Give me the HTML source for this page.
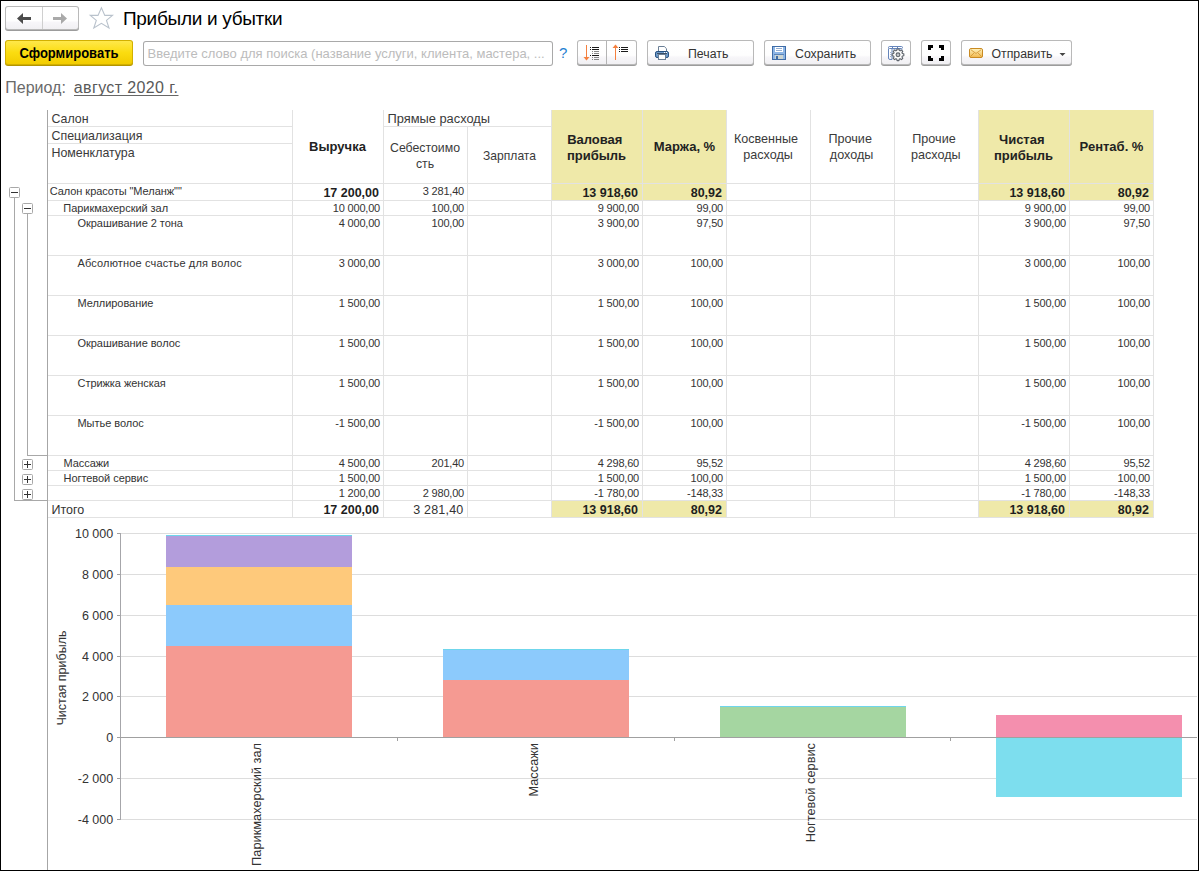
<!DOCTYPE html>
<html><head><meta charset="utf-8"><title>Прибыли и убытки</title>
<style>
html,body{margin:0;padding:0;background:#fff;}
body{width:1199px;height:871px;overflow:hidden;}
svg{display:block;font-family:"Liberation Sans",sans-serif;}
</style></head><body>
<svg width="1199" height="871" viewBox="0 0 1199 871">
<rect x="0" y="0" width="1199" height="871" fill="#fff"/>
<defs>
<linearGradient id="gbtn" x1="0" y1="0" x2="0" y2="1">
 <stop offset="0" stop-color="#ffffff"/><stop offset="0.62" stop-color="#fefefe"/><stop offset="0.7" stop-color="#f7f6f9"/><stop offset="1" stop-color="#f1f0f3"/>
</linearGradient>
<linearGradient id="gyel" x1="0" y1="0" x2="0" y2="1">
 <stop offset="0" stop-color="#ffe84a"/><stop offset="0.5" stop-color="#fbdc10"/><stop offset="1" stop-color="#f2cc00"/>
</linearGradient>
</defs>
<rect x="5" y="7" width="74" height="24" fill="#9c9c9c" rx="3"/>
<rect x="5" y="6" width="74" height="24" fill="#b9b9b9" rx="3"/>
<rect x="6" y="7" width="72" height="22" fill="url(#gbtn)" rx="2"/>
<rect x="42" y="7" width="1" height="22" fill="#cfcfcf"/>
<path d="M17 18.5 L23 13 L23 17 L31 17 L31 20 L23 20 L23 24 Z" fill="#4b4b4b"/>
<path d="M67 18.5 L61 13 L61 17 L53 17 L53 20 L61 20 L61 24 Z" fill="#a9a9a9"/>
<path d="M101.4 7.8 L104.8 15.4 L112.5 15.4 L106.5 20.4 L109 28 L101.4 23.3 L93.8 28 L96.3 20.4 L90.3 15.4 L98 15.4 Z" fill="none" stroke="#b9c2cc" stroke-width="1.1" stroke-linejoin="miter"/>
<text x="123" y="25" font-size="19" fill="#000" letter-spacing="-0.3">Прибыли и убытки</text>
<rect x="5" y="41" width="128" height="25" fill="#b39500" rx="3"/>
<rect x="5" y="40" width="128" height="25" fill="#d2b000" rx="3"/>
<rect x="6" y="41" width="126" height="23" fill="url(#gyel)" rx="2"/>
<text x="19.5" y="58" font-size="14" font-weight="700" fill="#000" textLength="99" lengthAdjust="spacingAndGlyphs">Сформировать</text>
<rect x="143" y="41" width="410" height="25" fill="#a9a9a9" rx="3"/>
<rect x="144" y="42" width="408" height="23" fill="#ffffff" rx="2"/>
<text x="147.5" y="57.5" font-size="13" fill="#bcbcbc">Введите слово для поиска (название услуги, клиента, мастера, ...</text>
<text x="559" y="58" font-size="15" fill="#1f7fd1">?</text>
<rect x="577" y="41" width="60" height="25" fill="#9c9c9c" rx="3"/>
<rect x="577" y="40" width="60" height="25" fill="#b9b9b9" rx="3"/>
<rect x="578" y="41" width="58" height="23" fill="url(#gbtn)" rx="2"/>
<rect x="606" y="41" width="1" height="24" fill="#b4b4b4"/>
<g fill="#f5803e"><rect x="586" y="45" width="1" height="13"/><path d="M583.5 57 L589.5 57 L586.5 60.5 Z"/></g>
<rect x="590" y="47" width="1" height="1" fill="#1a1a1a"/>
<rect x="592" y="47" width="7" height="1" fill="#1a1a1a"/>
<rect x="590" y="49" width="1" height="1" fill="#1a1a1a"/>
<rect x="592" y="49" width="7" height="1" fill="#1a1a1a"/>
<rect x="592" y="51" width="1" height="1" fill="#8a8a8a"/>
<rect x="594" y="51" width="5" height="1" fill="#8a8a8a"/>
<rect x="592" y="53" width="1" height="1" fill="#8a8a8a"/>
<rect x="594" y="53" width="5" height="1" fill="#8a8a8a"/>
<rect x="590" y="55" width="1" height="1" fill="#1a1a1a"/>
<rect x="592" y="55" width="7" height="1" fill="#1a1a1a"/>
<rect x="592" y="57" width="1" height="1" fill="#8a8a8a"/>
<rect x="594" y="57" width="5" height="1" fill="#8a8a8a"/>
<rect x="592" y="59" width="1" height="1" fill="#8a8a8a"/>
<rect x="594" y="59" width="5" height="1" fill="#8a8a8a"/>
<g fill="#f5803e"><rect x="615" y="47" width="1" height="13"/><path d="M612.5 48 L618.5 48 L615.5 44.5 Z"/></g>
<rect x="619" y="47" width="1" height="1" fill="#1a1a1a"/>
<rect x="621" y="47" width="7" height="1" fill="#1a1a1a"/>
<rect x="619" y="49" width="1" height="1" fill="#1a1a1a"/>
<rect x="621" y="49" width="7" height="1" fill="#1a1a1a"/>
<rect x="619" y="51" width="1" height="1" fill="#1a1a1a"/>
<rect x="621" y="51" width="7" height="1" fill="#1a1a1a"/>
<rect x="647" y="41" width="107" height="25" fill="#9c9c9c" rx="3"/>
<rect x="647" y="40" width="107" height="25" fill="#b9b9b9" rx="3"/>
<rect x="648" y="41" width="105" height="23" fill="url(#gbtn)" rx="2"/>
<path d="M658.5 51 V46.5 H664.3 L666.5 48.7 V51" fill="#fff" stroke="#6a7f96" stroke-width="1"/>
<rect x="655.5" y="51.5" width="13" height="6" rx="1.6" fill="#6f9ac8" stroke="#244f80" stroke-width="1"/>
<rect x="657" y="53" width="10" height="1" fill="#3c4f66"/>
<rect x="664" y="52" width="1" height="1" fill="#ffffff"/>
<rect x="666" y="52" width="1" height="1" fill="#ffffff"/>
<rect x="658.5" y="54.5" width="7" height="5" fill="#fff" stroke="#6a7f96" stroke-width="1"/>
<text x="688" y="57.5" font-size="12.3" fill="#333">Печать</text>
<rect x="764" y="41" width="107" height="25" fill="#9c9c9c" rx="3"/>
<rect x="764" y="40" width="107" height="25" fill="#b9b9b9" rx="3"/>
<rect x="765" y="41" width="105" height="23" fill="url(#gbtn)" rx="2"/>
<rect x="772" y="46" width="14" height="14" fill="#3f6ca6"/>
<rect x="773" y="47" width="12" height="12" fill="#8db6e6"/>
<rect x="775" y="47" width="8" height="5" fill="#ffffff"/>
<rect x="776" y="48" width="6" height="1" fill="#93add0"/>
<rect x="776" y="50" width="6" height="1" fill="#93add0"/>
<rect x="774" y="54" width="10" height="1" fill="#5a82b6"/>
<rect x="775" y="55" width="8" height="4" fill="#cbd4d2"/>
<rect x="776" y="56" width="2" height="3" fill="#3f6ca6"/>
<text x="795" y="57.5" font-size="12.3" fill="#333">Сохранить</text>
<rect x="881" y="41" width="30" height="25" fill="#9c9c9c" rx="3"/>
<rect x="881" y="40" width="30" height="25" fill="#b9b9b9" rx="3"/>
<rect x="882" y="41" width="28" height="23" fill="url(#gbtn)" rx="2"/>
<g fill="none" stroke="#6585bb" stroke-width="1"><rect x="888.5" y="46.5" width="14" height="2" rx="1"/><path d="M888.5 48.5 V58 Q888.5 59.5 890 59.5 H892 V48.5"/></g>
<rect x="892" y="46" width="1" height="3" fill="#6585bb"/>
<rect x="897" y="46" width="1" height="3" fill="#6585bb"/>
<rect x="893" y="49" width="10" height="1" fill="#c9d3e3"/>
<rect x="902" y="49" width="1" height="3" fill="#c9d3e3"/>
<rect x="890" y="52" width="1" height="1" fill="#9fb0cf"/>
<rect x="890" y="54" width="1" height="1" fill="#9fb0cf"/>
<rect x="890" y="56" width="1" height="1" fill="#9fb0cf"/>
<path d="M902.33,53.56 L903.83,53.88 L903.83,55.72 L902.33,56.04 L901.94,56.98 L902.77,58.27 L901.47,59.57 L900.18,58.74 L899.24,59.13 L898.92,60.63 L897.08,60.63 L896.76,59.13 L895.82,58.74 L894.53,59.57 L893.23,58.27 L894.06,56.98 L893.67,56.04 L892.17,55.72 L892.17,53.88 L893.67,53.56 L894.06,52.62 L893.23,51.33 L894.53,50.03 L895.82,50.86 L896.76,50.47 L897.08,48.97 L898.92,48.97 L899.24,50.47 L900.18,50.86 L901.47,50.03 L902.77,51.33 L901.94,52.62 Z" fill="#fff" stroke="#5d636b" stroke-width="1.1" stroke-linejoin="round"/>
<circle cx="898" cy="54.8" r="1.9" fill="#c0c4ca" stroke="#5d636b" stroke-width="1.1"/>
<rect x="921" y="41" width="30" height="25" fill="#9c9c9c" rx="3"/>
<rect x="921" y="40" width="30" height="25" fill="#b9b9b9" rx="3"/>
<rect x="922" y="41" width="28" height="23" fill="url(#gbtn)" rx="2"/>
<g fill="#000"><path d="M928 45 h5 v3 h-2 v2 h-3 Z"/><path d="M944 45 h-5 v3 h2 v2 h3 Z"/><path d="M928 61 h5 v-3 h-2 v-2 h-3 Z"/><path d="M944 61 h-5 v-3 h2 v-2 h3 Z"/></g>
<rect x="961" y="41" width="111" height="25" fill="#9c9c9c" rx="3"/>
<rect x="961" y="40" width="111" height="25" fill="#b9b9b9" rx="3"/>
<rect x="962" y="41" width="109" height="23" fill="url(#gbtn)" rx="2"/>
<defs><linearGradient id="genv" x1="0" y1="0" x2="0" y2="1"><stop offset="0" stop-color="#fff4c0"/><stop offset="1" stop-color="#f1b64a"/></linearGradient></defs>
<rect x="969.5" y="48.5" width="13" height="9" rx="1.5" fill="url(#genv)" stroke="#c98a22" stroke-width="1"/>
<path d="M971 49.8 L976 53.5 L981 49.8 M970.5 56.5 L974 53 M981.5 56.5 L978 53" fill="none" stroke="#d49a38" stroke-width="0.9"/>
<text x="991.5" y="57.5" font-size="12.3" fill="#333">Отправить</text>
<path d="M1059.5 53 L1065.5 53 L1062.5 56 Z" fill="#444"/>
<text x="5.3" y="92.5" font-size="16" fill="#6a6a6a">Период:</text>
<text x="73.8" y="92.5" font-size="16" fill="#595959" letter-spacing="0.38">август 2020 г.</text>
<rect x="74" y="95" width="104.5" height="1" fill="#666"/>
<rect x="551" y="110" width="175" height="90" fill="#efe9a9"/>
<rect x="551" y="500" width="175" height="17" fill="#efe9a9"/>
<rect x="978" y="110" width="175" height="90" fill="#efe9a9"/>
<rect x="978" y="500" width="175" height="17" fill="#efe9a9"/>
<rect x="47" y="126" width="245" height="1" fill="#e2e2e2"/>
<rect x="47" y="143" width="245" height="1" fill="#e2e2e2"/>
<rect x="383" y="126" width="168" height="1" fill="#e2e2e2"/>
<rect x="47" y="183" width="1107" height="1" fill="#e2e2e2"/>
<rect x="47" y="200" width="1107" height="1" fill="#e2e2e2"/>
<rect x="47" y="215" width="1107" height="1" fill="#e2e2e2"/>
<rect x="47" y="255" width="1107" height="1" fill="#e2e2e2"/>
<rect x="47" y="295" width="1107" height="1" fill="#e2e2e2"/>
<rect x="47" y="335" width="1107" height="1" fill="#e2e2e2"/>
<rect x="47" y="375" width="1107" height="1" fill="#e2e2e2"/>
<rect x="47" y="415" width="1107" height="1" fill="#e2e2e2"/>
<rect x="47" y="455" width="1107" height="1" fill="#e2e2e2"/>
<rect x="47" y="470" width="1107" height="1" fill="#e2e2e2"/>
<rect x="47" y="485" width="1107" height="1" fill="#e2e2e2"/>
<rect x="47" y="500" width="1107" height="1" fill="#e2e2e2"/>
<rect x="47" y="517" width="1107" height="1" fill="#e2e2e2"/>
<rect x="292" y="110" width="1" height="407" fill="#e2e2e2"/>
<rect x="383" y="110" width="1" height="407" fill="#e2e2e2"/>
<rect x="467" y="126" width="1" height="391" fill="#e2e2e2"/>
<rect x="551" y="110" width="1" height="407" fill="#e2e2e2"/>
<rect x="642" y="110" width="1" height="407" fill="#e2e2e2"/>
<rect x="726" y="110" width="1" height="407" fill="#e2e2e2"/>
<rect x="810" y="110" width="1" height="407" fill="#e2e2e2"/>
<rect x="894" y="110" width="1" height="407" fill="#e2e2e2"/>
<rect x="978" y="110" width="1" height="407" fill="#e2e2e2"/>
<rect x="1069" y="110" width="1" height="407" fill="#e2e2e2"/>
<rect x="1153" y="110" width="1" height="407" fill="#e2e2e2"/>
<rect x="47" y="110" width="1" height="761" fill="#a6a6a6"/>
<text x="51.5" y="123" font-size="12.4" fill="#3a3a3a">Салон</text>
<text x="51.5" y="140" font-size="12.4" fill="#3a3a3a">Специализация</text>
<text x="51.5" y="157" font-size="12.4" fill="#3a3a3a">Номенклатура</text>
<text x="337.5" y="151" font-size="13" font-weight="700" fill="#222" text-anchor="middle">Выручка</text>
<text x="387.5" y="123" font-size="12.85" fill="#3a3a3a">Прямые расходы</text>
<text x="425" y="152" font-size="12.3" fill="#3a3a3a" text-anchor="middle">Себестоимо</text>
<text x="425" y="168" font-size="12.3" fill="#3a3a3a" text-anchor="middle">сть</text>
<text x="509.5" y="160" font-size="12.1" fill="#3a3a3a" text-anchor="middle">Зарплата</text>
<text x="594.8" y="143.5" font-size="13" font-weight="700" fill="#222" text-anchor="middle">Валовая</text>
<text x="596.5" y="159.5" font-size="13" font-weight="700" fill="#222" text-anchor="middle">прибыль</text>
<text x="684.5" y="151" font-size="13" font-weight="700" fill="#222" text-anchor="middle">Маржа, %</text>
<text x="766" y="143" font-size="12.6" fill="#3a3a3a" text-anchor="middle">Косвенные</text>
<text x="768" y="159" font-size="12.6" fill="#3a3a3a" text-anchor="middle">расходы</text>
<text x="850.2" y="143" font-size="12.6" fill="#3a3a3a" text-anchor="middle">Прочие</text>
<text x="851.6" y="159" font-size="12.6" fill="#3a3a3a" text-anchor="middle">доходы</text>
<text x="934" y="143" font-size="12.6" fill="#3a3a3a" text-anchor="middle">Прочие</text>
<text x="935.8" y="159" font-size="12.6" fill="#3a3a3a" text-anchor="middle">расходы</text>
<text x="1021.8" y="143.5" font-size="13" font-weight="700" fill="#222" text-anchor="middle">Чистая</text>
<text x="1023.5" y="159.5" font-size="13" font-weight="700" fill="#222" text-anchor="middle">прибыль</text>
<text x="1111.5" y="151" font-size="13" font-weight="700" fill="#222" text-anchor="middle">Рентаб. %</text>
<text x="49.7" y="195.3" font-size="11" fill="#333" letter-spacing="-0.05">Салон красоты &quot;Меланж&quot;&quot;</text>
<text x="379" y="196.60000000000002" font-size="12.5" font-weight="700" fill="#1e1e1e" text-anchor="end">17 200,00</text>
<text x="464" y="195.3" font-size="11" fill="#333" text-anchor="end" letter-spacing="-0.2">3 281,40</text>
<text x="638" y="196.60000000000002" font-size="12.5" font-weight="700" fill="#1e1e1e" text-anchor="end">13 918,60</text>
<text x="722" y="196.60000000000002" font-size="12.5" font-weight="700" fill="#1e1e1e" text-anchor="end">80,92</text>
<text x="1065" y="196.60000000000002" font-size="12.5" font-weight="700" fill="#1e1e1e" text-anchor="end">13 918,60</text>
<text x="1149" y="196.60000000000002" font-size="12.5" font-weight="700" fill="#1e1e1e" text-anchor="end">80,92</text>
<text x="63.3" y="211.7" font-size="11" fill="#333" letter-spacing="-0.05">Парикмахерский зал</text>
<text x="380" y="211.7" font-size="11" fill="#333" text-anchor="end" letter-spacing="-0.2">10 000,00</text>
<text x="464" y="211.7" font-size="11" fill="#333" text-anchor="end" letter-spacing="-0.2">100,00</text>
<text x="639" y="211.7" font-size="11" fill="#333" text-anchor="end" letter-spacing="-0.2">9 900,00</text>
<text x="723" y="211.7" font-size="11" fill="#333" text-anchor="end" letter-spacing="-0.2">99,00</text>
<text x="1066" y="211.7" font-size="11" fill="#333" text-anchor="end" letter-spacing="-0.2">9 900,00</text>
<text x="1150" y="211.7" font-size="11" fill="#333" text-anchor="end" letter-spacing="-0.2">99,00</text>
<text x="77.5" y="227.2" font-size="11" fill="#333" letter-spacing="-0.05">Окрашивание 2 тона</text>
<text x="380" y="227.2" font-size="11" fill="#333" text-anchor="end" letter-spacing="-0.2">4 000,00</text>
<text x="464" y="227.2" font-size="11" fill="#333" text-anchor="end" letter-spacing="-0.2">100,00</text>
<text x="639" y="227.2" font-size="11" fill="#333" text-anchor="end" letter-spacing="-0.2">3 900,00</text>
<text x="723" y="227.2" font-size="11" fill="#333" text-anchor="end" letter-spacing="-0.2">97,50</text>
<text x="1066" y="227.2" font-size="11" fill="#333" text-anchor="end" letter-spacing="-0.2">3 900,00</text>
<text x="1150" y="227.2" font-size="11" fill="#333" text-anchor="end" letter-spacing="-0.2">97,50</text>
<text x="77.5" y="267.2" font-size="11" fill="#333" letter-spacing="0.15">Абсолютное счастье для волос</text>
<text x="380" y="267.2" font-size="11" fill="#333" text-anchor="end" letter-spacing="-0.2">3 000,00</text>
<text x="639" y="267.2" font-size="11" fill="#333" text-anchor="end" letter-spacing="-0.2">3 000,00</text>
<text x="723" y="267.2" font-size="11" fill="#333" text-anchor="end" letter-spacing="-0.2">100,00</text>
<text x="1066" y="267.2" font-size="11" fill="#333" text-anchor="end" letter-spacing="-0.2">3 000,00</text>
<text x="1150" y="267.2" font-size="11" fill="#333" text-anchor="end" letter-spacing="-0.2">100,00</text>
<text x="77.5" y="307.2" font-size="11" fill="#333" letter-spacing="-0.05">Меллирование</text>
<text x="380" y="307.2" font-size="11" fill="#333" text-anchor="end" letter-spacing="-0.2">1 500,00</text>
<text x="639" y="307.2" font-size="11" fill="#333" text-anchor="end" letter-spacing="-0.2">1 500,00</text>
<text x="723" y="307.2" font-size="11" fill="#333" text-anchor="end" letter-spacing="-0.2">100,00</text>
<text x="1066" y="307.2" font-size="11" fill="#333" text-anchor="end" letter-spacing="-0.2">1 500,00</text>
<text x="1150" y="307.2" font-size="11" fill="#333" text-anchor="end" letter-spacing="-0.2">100,00</text>
<text x="77.5" y="347.2" font-size="11" fill="#333" letter-spacing="-0.05">Окрашивание волос</text>
<text x="380" y="347.2" font-size="11" fill="#333" text-anchor="end" letter-spacing="-0.2">1 500,00</text>
<text x="639" y="347.2" font-size="11" fill="#333" text-anchor="end" letter-spacing="-0.2">1 500,00</text>
<text x="723" y="347.2" font-size="11" fill="#333" text-anchor="end" letter-spacing="-0.2">100,00</text>
<text x="1066" y="347.2" font-size="11" fill="#333" text-anchor="end" letter-spacing="-0.2">1 500,00</text>
<text x="1150" y="347.2" font-size="11" fill="#333" text-anchor="end" letter-spacing="-0.2">100,00</text>
<text x="77.5" y="387.2" font-size="11" fill="#333" letter-spacing="-0.05">Стрижка женская</text>
<text x="380" y="387.2" font-size="11" fill="#333" text-anchor="end" letter-spacing="-0.2">1 500,00</text>
<text x="639" y="387.2" font-size="11" fill="#333" text-anchor="end" letter-spacing="-0.2">1 500,00</text>
<text x="723" y="387.2" font-size="11" fill="#333" text-anchor="end" letter-spacing="-0.2">100,00</text>
<text x="1066" y="387.2" font-size="11" fill="#333" text-anchor="end" letter-spacing="-0.2">1 500,00</text>
<text x="1150" y="387.2" font-size="11" fill="#333" text-anchor="end" letter-spacing="-0.2">100,00</text>
<text x="77.5" y="427.0" font-size="11" fill="#333" letter-spacing="-0.05">Мытье волос</text>
<text x="380" y="427.0" font-size="11" fill="#333" text-anchor="end" letter-spacing="-0.2">-1 500,00</text>
<text x="639" y="427.0" font-size="11" fill="#333" text-anchor="end" letter-spacing="-0.2">-1 500,00</text>
<text x="723" y="427.0" font-size="11" fill="#333" text-anchor="end" letter-spacing="-0.2">100,00</text>
<text x="1066" y="427.0" font-size="11" fill="#333" text-anchor="end" letter-spacing="-0.2">-1 500,00</text>
<text x="1150" y="427.0" font-size="11" fill="#333" text-anchor="end" letter-spacing="-0.2">100,00</text>
<text x="63.5" y="466.8" font-size="11" fill="#333" letter-spacing="-0.05">Массажи</text>
<text x="380" y="466.8" font-size="11" fill="#333" text-anchor="end" letter-spacing="-0.2">4 500,00</text>
<text x="464" y="466.8" font-size="11" fill="#333" text-anchor="end" letter-spacing="-0.2">201,40</text>
<text x="639" y="466.8" font-size="11" fill="#333" text-anchor="end" letter-spacing="-0.2">4 298,60</text>
<text x="723" y="466.8" font-size="11" fill="#333" text-anchor="end" letter-spacing="-0.2">95,52</text>
<text x="1066" y="466.8" font-size="11" fill="#333" text-anchor="end" letter-spacing="-0.2">4 298,60</text>
<text x="1150" y="466.8" font-size="11" fill="#333" text-anchor="end" letter-spacing="-0.2">95,52</text>
<text x="63.5" y="481.8" font-size="11" fill="#333" letter-spacing="-0.05">Ногтевой сервис</text>
<text x="380" y="481.8" font-size="11" fill="#333" text-anchor="end" letter-spacing="-0.2">1 500,00</text>
<text x="639" y="481.8" font-size="11" fill="#333" text-anchor="end" letter-spacing="-0.2">1 500,00</text>
<text x="723" y="481.8" font-size="11" fill="#333" text-anchor="end" letter-spacing="-0.2">100,00</text>
<text x="1066" y="481.8" font-size="11" fill="#333" text-anchor="end" letter-spacing="-0.2">1 500,00</text>
<text x="1150" y="481.8" font-size="11" fill="#333" text-anchor="end" letter-spacing="-0.2">100,00</text>
<text x="380" y="496.8" font-size="11" fill="#333" text-anchor="end" letter-spacing="-0.2">1 200,00</text>
<text x="464" y="496.8" font-size="11" fill="#333" text-anchor="end" letter-spacing="-0.2">2 980,00</text>
<text x="639" y="496.8" font-size="11" fill="#333" text-anchor="end" letter-spacing="-0.2">-1 780,00</text>
<text x="723" y="496.8" font-size="11" fill="#333" text-anchor="end" letter-spacing="-0.2">-148,33</text>
<text x="1066" y="496.8" font-size="11" fill="#333" text-anchor="end" letter-spacing="-0.2">-1 780,00</text>
<text x="1150" y="496.8" font-size="11" fill="#333" text-anchor="end" letter-spacing="-0.2">-148,33</text>
<text x="51.5" y="513.7" font-size="12.5" fill="#333">Итого</text>
<text x="379" y="513.8" font-size="12.5" font-weight="700" fill="#1e1e1e" text-anchor="end">17 200,00</text>
<text x="463.5" y="513.8" font-size="12.5" fill="#333" text-anchor="end" letter-spacing="0.2">3 281,40</text>
<text x="638" y="513.8" font-size="12.5" font-weight="700" fill="#1e1e1e" text-anchor="end">13 918,60</text>
<text x="722" y="513.8" font-size="12.5" font-weight="700" fill="#1e1e1e" text-anchor="end">80,92</text>
<text x="1065" y="513.8" font-size="12.5" font-weight="700" fill="#1e1e1e" text-anchor="end">13 918,60</text>
<text x="1149" y="513.8" font-size="12.5" font-weight="700" fill="#1e1e1e" text-anchor="end">80,92</text>
<rect x="14" y="197" width="1" height="303" fill="#a8a8a8"/>
<rect x="14" y="500" width="33" height="1" fill="#a8a8a8"/>
<rect x="27" y="213" width="1" height="242" fill="#a8a8a8"/>
<rect x="27" y="455" width="20" height="1" fill="#a8a8a8"/>
<rect x="9.5" y="187.5" width="10" height="10" fill="#fff" stroke="#a8a8a8" stroke-width="1" rx="1"/>
<rect x="11" y="192" width="7" height="1" fill="#333"/>
<rect x="22.5" y="203.5" width="10" height="10" fill="#fff" stroke="#a8a8a8" stroke-width="1" rx="1"/>
<rect x="24" y="208" width="7" height="1" fill="#333"/>
<rect x="22.5" y="459.5" width="10" height="10" fill="#fff" stroke="#a8a8a8" stroke-width="1" rx="1"/>
<rect x="24" y="464" width="7" height="1" fill="#333"/>
<rect x="27" y="461" width="1" height="7" fill="#333"/>
<rect x="22.5" y="474.5" width="10" height="10" fill="#fff" stroke="#a8a8a8" stroke-width="1" rx="1"/>
<rect x="24" y="479" width="7" height="1" fill="#333"/>
<rect x="27" y="476" width="1" height="7" fill="#333"/>
<rect x="22.5" y="489.5" width="10" height="10" fill="#fff" stroke="#a8a8a8" stroke-width="1" rx="1"/>
<rect x="24" y="494" width="7" height="1" fill="#333"/>
<rect x="27" y="491" width="1" height="7" fill="#333"/>
<rect x="120" y="533" width="1077" height="1" fill="#dddddd"/>
<rect x="117" y="533" width="3" height="1" fill="#a0a0a0"/>
<text x="113.2" y="537.5" font-size="12.5" fill="#333" text-anchor="end">10 000</text>
<rect x="120" y="574" width="1077" height="1" fill="#dddddd"/>
<rect x="117" y="574" width="3" height="1" fill="#a0a0a0"/>
<text x="113.2" y="578.5" font-size="12.5" fill="#333" text-anchor="end">8 000</text>
<rect x="120" y="615" width="1077" height="1" fill="#dddddd"/>
<rect x="117" y="615" width="3" height="1" fill="#a0a0a0"/>
<text x="113.2" y="619.5" font-size="12.5" fill="#333" text-anchor="end">6 000</text>
<rect x="120" y="656" width="1077" height="1" fill="#dddddd"/>
<rect x="117" y="656" width="3" height="1" fill="#a0a0a0"/>
<text x="113.2" y="660.5" font-size="12.5" fill="#333" text-anchor="end">4 000</text>
<rect x="120" y="696" width="1077" height="1" fill="#dddddd"/>
<rect x="117" y="696" width="3" height="1" fill="#a0a0a0"/>
<text x="113.2" y="700.5" font-size="12.5" fill="#333" text-anchor="end">2 000</text>
<rect x="120" y="737" width="1077" height="1" fill="#dddddd"/>
<rect x="117" y="737" width="3" height="1" fill="#a0a0a0"/>
<text x="113.2" y="741.5" font-size="12.5" fill="#333" text-anchor="end">0</text>
<rect x="120" y="778" width="1077" height="1" fill="#dddddd"/>
<rect x="117" y="778" width="3" height="1" fill="#a0a0a0"/>
<text x="113.2" y="782.5" font-size="12.5" fill="#333" text-anchor="end">-2 000</text>
<rect x="120" y="819" width="1077" height="1" fill="#dddddd"/>
<rect x="117" y="819" width="3" height="1" fill="#a0a0a0"/>
<text x="113.2" y="823.5" font-size="12.5" fill="#333" text-anchor="end">-4 000</text>
<rect x="120" y="533" width="1" height="287" fill="#a6a6aa"/>
<rect x="166" y="645.70" width="186" height="91.60" fill="#f59a92" shape-rendering="crispEdges"/>
<rect x="166" y="604.99" width="186" height="40.71" fill="#8ccafc" shape-rendering="crispEdges"/>
<rect x="166" y="567.34" width="186" height="37.66" fill="#fec97b" shape-rendering="crispEdges"/>
<rect x="166" y="535.79" width="186" height="31.55" fill="#b39ddc" shape-rendering="crispEdges"/>
<rect x="166" y="534.77" width="186" height="1.02" fill="#6fd6ec" shape-rendering="crispEdges"/>
<rect x="443" y="680.31" width="186" height="56.99" fill="#f59a92" shape-rendering="crispEdges"/>
<rect x="443" y="649.80" width="186" height="30.50" fill="#8ccafc" shape-rendering="crispEdges"/>
<rect x="443" y="648.86" width="186" height="0.94" fill="#6fd6ec" shape-rendering="crispEdges"/>
<rect x="720" y="706.77" width="186" height="30.53" fill="#a5d6a1" shape-rendering="crispEdges"/>
<rect x="720" y="705.95" width="186" height="0.81" fill="#6fd6ec" shape-rendering="crispEdges"/>
<rect x="996" y="715.32" width="186" height="21.98" fill="#f48fae" shape-rendering="crispEdges"/>
<rect x="996" y="737.30" width="186" height="59.64" fill="#7ddeee" shape-rendering="crispEdges"/>
<rect x="117" y="737" width="1080" height="1" fill="#a0a0a0"/>
<rect x="397" y="737" width="1" height="4" fill="#a0a0a0"/>
<rect x="674" y="737" width="1" height="4" fill="#a0a0a0"/>
<rect x="950" y="737" width="1" height="4" fill="#a0a0a0"/>
<text transform="translate(66,678) rotate(-90)" font-size="12.5" fill="#333" text-anchor="middle">Чистая прибыль</text>
<text transform="translate(261,743) rotate(-90)" font-size="12.8" fill="#333" text-anchor="end">Парикмахерский зал</text>
<text transform="translate(538,743) rotate(-90)" font-size="12.8" fill="#333" text-anchor="end">Массажи</text>
<text transform="translate(815,743) rotate(-90)" font-size="12.8" fill="#333" text-anchor="end">Ногтевой сервис</text>
<rect x="0.5" y="0.5" width="1198" height="870" fill="none" stroke="#000" stroke-width="1"/>
</svg>
</body></html>
